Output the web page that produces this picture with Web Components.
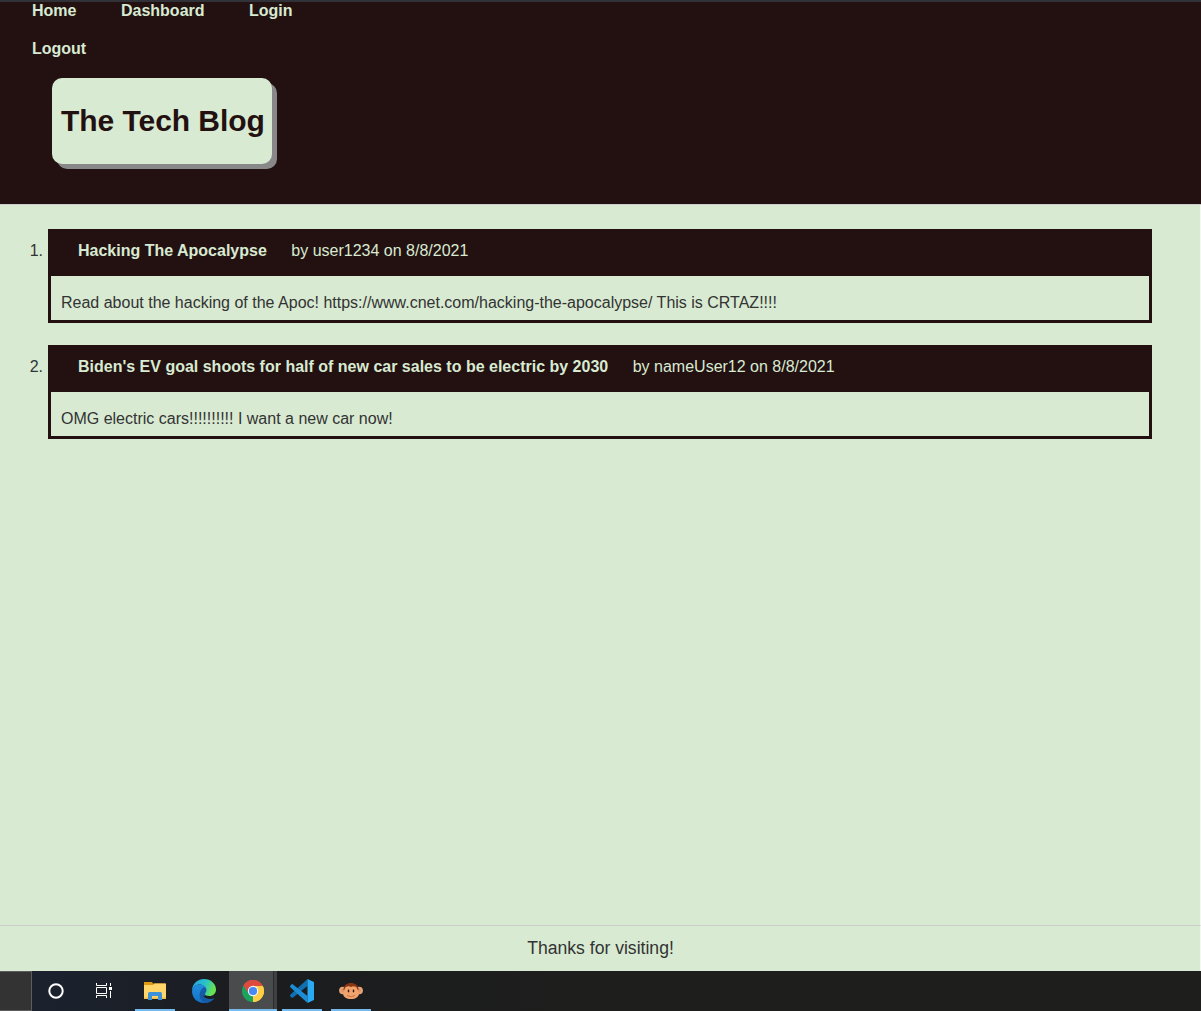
<!DOCTYPE html>
<html lang="en">
<head>
<meta charset="utf-8">
<title>The Tech Blog</title>
<style>
html, body { margin: 0; height: 100%; }
body { font-family: "Liberation Sans", Arial, sans-serif; font-size: 16px; color: #333; background: #d8ead2; overflow: hidden; }
</style>
</head>
<body>
<tech-blog></tech-blog>
<script>
const define = (name, html) => customElements.define(name, class extends HTMLElement {
  constructor() {
    super();
    this.attachShadow({ mode: 'open' }).innerHTML = html;
  }
});

define('nav-link', `
<style>
:host { display: block; color: #d8ead2; font-weight: bold; line-height: 18px; white-space: nowrap; }
</style><slot></slot>`);

define('blog-header', `
<style>
:host { display: flex; flex-direction: column; align-items: flex-start; box-sizing: border-box; height: 205px; background: #231111; border-top: 2px solid #303238; border-bottom: 1px solid #ccc; }
nav { display: flex; flex-wrap: wrap; column-gap: 44.5px; row-gap: 20px; width: 300px; padding-left: 32px; }
h1 { margin: 20px 0 0 52px; width: 220px; height: 86px; box-sizing: border-box; padding-left: 9px; font-size: 30px; letter-spacing: -0.05px; line-height: 86px; color: #231111; background: #d8ead2; border-radius: 10px; box-shadow: 5px 5px #888; white-space: nowrap; }
</style>
<nav><nav-link>Home</nav-link><nav-link>Dashboard</nav-link><nav-link>Login</nav-link><nav-link>Logout</nav-link></nav>
<h1>The Tech Blog</h1>`);

define('blog-post', `
<style>
:host { display: flex; height: 94px; margin-bottom: 22px; white-space: nowrap; }
.num { width: 43px; margin-right: 5px; text-align: right; line-height: 18px; padding-top: 13px; }
article { flex: 1; box-sizing: border-box; border: 3px solid #231111; }
header { display: flex; gap: 24.5px; box-sizing: border-box; height: 44px; padding: 10px 0 0 27px; line-height: 18px; color: #d8ead2; background: #231111; }
.title { font-weight: bold; }
.body { padding: 18px 0 0 10px; line-height: 18px; }
</style>
<span class="num"><slot name="num"></slot></span>
<article>
<header><span class="title"><slot name="title"></slot></span><span><slot name="meta"></slot></span></header>
<div class="body"><slot></slot></div>
</article>`);

define('blog-footer', `
<style>
:host { display: block; box-sizing: border-box; height: 46px; padding-left: 1px; border-top: 1px solid #ccc; text-align: center; font-size: 17.6px; line-height: 44px; }
</style><slot></slot>`);

define('task-button', `
<style>
:host { display: flex; box-sizing: border-box; width: 40px; height: 40px; margin-right: 9px; align-items: center; justify-content: center; }
:host([running]) { border-bottom: 2px solid #76b9ed; padding-top: 2px; }
:host([active]) { width: 48px; margin-left: -4px; margin-right: 5px; background: linear-gradient(90deg, #4a4b4d 44px, #2b2c2d 44px, #2b2c2d 45px, #3f4042 45px); }
</style><slot></slot>`);

define('task-bar', `
<style>
:host { display: flex; height: 40px; background: linear-gradient(90deg, #1b2330 0, #1b2029 120px, #1b1c1e 250px, #1e1e1d 600px, #1e1e1d); }
.edge { box-sizing: border-box; width: 32px; height: 40px; margin-right: 4px; background: #333; border: 1px solid #5b5c5b; border-left: 0; }
.view { margin-left: -1px; margin-right: 11px; }
svg { display: block; flex: none; }
</style>
<div class="edge"></div>
<task-button><svg width="18" height="18" viewBox="0 0 18 18"><circle cx="9" cy="9" r="6.700" fill="none" stroke="#fff" stroke-width="2"/></svg></task-button>
<task-button class="view"><svg width="18" height="18" viewBox="0 0 18 18" fill="none" stroke="#fff"><path d="M1.500 1v2.500h10V1M1.500 16v-2.500h10V16M1.500 5.500h10v6h-10zM15.500 1v3M15.500 9v7"/><path d="M14 5h3v3h-3z" fill="#fff" stroke="none"/></svg></task-button>
<task-button running><svg width="24" height="22" viewBox="0 0 24 22"><path d="M1 2h8l1 1.500h12v4H1z" fill="#df9a12"/><path d="M1 5h9l1.500-1.500H23V19H1z" fill="#ffd667"/><path d="M1 17.500h22V19H1z" fill="#f1bd45"/><path d="M5 20v-6.500q0-1.500 1.500-1.500h11q1.500 0 1.500 1.500V20h-4v-4H9v4z" fill="#3c92d8"/></svg></task-button>
<task-button><svg width="24" height="24" viewBox="0 0 24 24">
<defs><linearGradient id="eg" x1="0" y1="0" x2="1" y2=".3"><stop stop-color="#209ee2"/><stop offset=".6" stop-color="#2bc4c6"/><stop offset="1" stop-color="#69e251"/></linearGradient><linearGradient id="eb" x1="0" y1="0" x2="0" y2="1"><stop stop-color="#218fdf"/><stop offset="1" stop-color="#1470c5"/></linearGradient></defs>
<ellipse cx="12" cy="12" rx="4" ry="5" fill="#165aa5"/>
<path d="M0 12C0 5 5 0 12 0s12 5 12 10.500c0 4-3 6.500-6.500 6.500-3 0-4.500-1-4.500-2s1.500-1.500 1.500-4C14.500 8 11 5.500 7.500 5.500S1 8 0 12z" fill="url(#eg)"/>
<path d="M0 12c1-5 4.500-6.500 8-6.500 2.500 0 5 1 6 3-2.500-1-5 1-5 4.500 0 5 4 8 8.500 8 2 0 3.500-.8 4.500-1.500C20 22 16.500 24 12 24 5 24 0 19 0 12z" fill="url(#eb)"/>
<path d="M9 11c-3 5-1 11 3.500 13 4 .2 8-2 10-5-1.500.8-3 1-4.500 1C13 20 9 16.500 9 11z" fill="#165aa5"/></svg></task-button>
<task-button running active><svg width="24" height="24" viewBox="0 0 24 24"><path d="M12 12 2.470 6.500A11 11 0 0 1 21.530 6.500z" fill="#dd4b3e"/><path d="M12 12 21.530 6.500A11 11 0 0 1 12 23z" fill="#ffce44"/><path d="M12 12 12 23A11 11 0 0 1 2.470 6.500z" fill="#1ba35d"/><path d="M12 7h9.800A11 11 0 0 0 2.470 6.500L7.670 14.500z" fill="#dd4b3e"/><path d="M21.800 7H12l4.330 7.500L12 23A11 11 0 0 0 21.800 7z" fill="#ffce44"/><circle cx="12" cy="12" r="5.200" fill="#f5f5f5"/><circle cx="12" cy="12" r="4.100" fill="#4788f4"/></svg></task-button>
<task-button running><svg width="24" height="24" viewBox="0 0 24 24"><path d="M17.500 0v7L3 18.600c-.5.400-1 .4-1.500 0L.3 17.300c-.5-.5-.5-1 0-1.500z" fill="#0f6fb0"/><path d="M17.500 24v-7L3 5.400c-.5-.4-1-.4-1.500 0L.3 6.700c-.5.500-.5 1 0 1.500z" fill="#1c8cd4"/><path d="M17.500 0 24 3v18l-6.500 3z" fill="#2aaaf2"/></svg></task-button>
<task-button running><svg width="24" height="24" viewBox="0 0 24 24"><ellipse cx="3.800" cy="11.500" rx="3.700" ry="3.800" fill="#e9a577"/><ellipse cx="20.200" cy="11.500" rx="3.700" ry="3.800" fill="#e9a577"/><ellipse cx="4" cy="11.500" rx="1.800" ry="2.200" fill="#dc9566"/><ellipse cx="20" cy="11.500" rx="1.800" ry="2.200" fill="#dc9566"/><path d="M4.500 11c0-5 3.500-7 7.500-7s7.500 2 7.500 7z" fill="#8a3514"/><path d="M12 8c2.500-1.500 6-.5 6.500 2.500.3 1.500 1.500 2.500 1.500 4 0 3.500-3.500 5.500-8 5.500s-8-2-8-5.500c0-1.500 1.200-2.500 1.500-4C6 7.500 9.500 6.500 12 8z" fill="#f0a36c"/><ellipse cx="9.500" cy="12" rx=".8" ry="1.400" fill="#35170e"/><ellipse cx="14.500" cy="12" rx=".8" ry="1.400" fill="#35170e"/><path d="M8 16.500q4 2.500 8 0" fill="none" stroke="#b5643c" stroke-width=".8"/></svg></task-button>`);

define('tech-blog', `
<style>
:host { display: flex; flex-direction: column; height: 1011px; }
.page { display: flex; flex-direction: column; flex: 1; }
main { flex: 1; padding: 24px 48px 0 0; }
main, blog-footer { border-right: 1px solid #f4f8f2; }
</style>
<div class="page">
<blog-header></blog-header>
<main>
<blog-post><span slot="num">1.</span><span slot="title">Hacking The Apocalypse</span><span slot="meta">by user1234 on 8/8/2021</span>Read about the hacking of the Apoc! https://www.cnet.com/hacking-the-apocalypse/ This is CRTAZ!!!!</blog-post>
<blog-post><span slot="num">2.</span><span slot="title">Biden's EV goal shoots for half of new car sales to be electric by 2030</span><span slot="meta">by nameUser12 on 8/8/2021</span>OMG electric cars!!!!!!!!!! I want a new car now!</blog-post>
</main>
<blog-footer>Thanks for visiting!</blog-footer>
</div>
<task-bar></task-bar>`);
</script>
</body>
</html>
